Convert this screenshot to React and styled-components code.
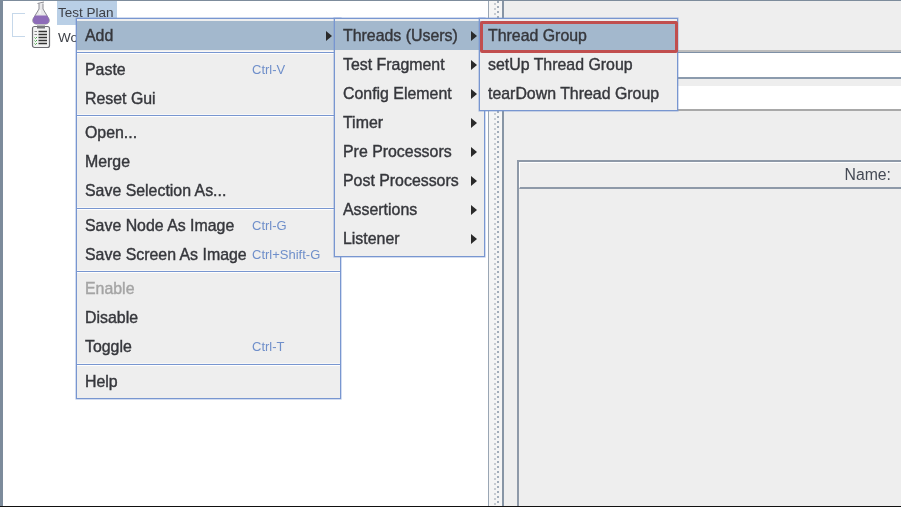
import React from 'react';
import styled, { createGlobalStyle } from 'styled-components';

const GlobalStyle = createGlobalStyle`
  html, body {
    margin: 0;
    padding: 0;
    background: #fff;
  }
`;

const Page = styled.div`
  position: relative;
  width: 901px;
  height: 507px;
  overflow: hidden;
  box-sizing: border-box;
  display: flex;
  border-top: 1px solid #7d8c9c;
  border-bottom: 1px solid #111;
  background: #eee;
  font-family: "Liberation Sans", Arial, sans-serif;
  filter: blur(0.3px);
`;

const TreePane = styled.div`
  flex: 0 0 489px;
  box-sizing: border-box;
  border-left: 3px solid #7c8b9b;
  border-right: 1px solid #9aa6b4;
  background: #fff;
  padding-left: 9px;
`;

const TreeRow = styled.div`
  display: flex;
  align-items: center;
  height: 24px;
  gap: 6px;
  padding-left: 19px;
  font-size: 13.5px;
  color: #3c3f46;
`;

const TreeLines = styled.div`
  position: absolute;
  left: 12px;
  top: 12px;
  width: 13px;
  height: 24px;
  box-sizing: border-box;
  border: 1px solid #c6d8ea;
  border-right: none;
`;

const TreeLabel = styled.span`
  padding: ${props => (props.selected ? '4px 3px 5px 1px' : '0 1px')};
  background: ${props => (props.selected ? '#b9cfe6' : 'transparent')};
`;

const Splitter = styled.div`
  flex: 0 0 15px;
  box-sizing: border-box;
  display: flex;
  justify-content: center;
  background: #f5f5f5;
  border-right: 2px solid #8795a5;
  padding-left: 1px;
`;

const Grip = styled.div`
  width: 5px;
  height: 100%;
  background-image:
    linear-gradient(to bottom, #a3adba 0 2px, transparent 2px),
    linear-gradient(to bottom, #c6cbd1 0 2px, transparent 2px);
  background-size: 2px 5px;
  background-position: 3px 0, 0 2px;
  background-repeat: repeat-y;
`;

const EditorPane = styled.div`
  flex: 1;
  display: flex;
  flex-direction: column;
  background: #eee;
`;

const TopBlank = styled.div`
  height: 49px;
  border-bottom: 2px solid #bcbcbc;
`;

const InputStrip = styled.div`
  background: #fff;
  height: ${props => props.h}px;
  border-top: ${props => (props.first ? '1px solid #7e90a6' : 'none')};
  border-bottom: 2px solid ${props => (props.first ? '#8c9bad' : '#a8a8a8')};
  margin-bottom: ${props => props.gap}px;
`;

const Panel = styled.div`
  flex: 1;
  margin: 0 0 0 13px;
  box-sizing: border-box;
  border-left: 2px solid #8e99a8;
  border-top: 2px solid #8e99a8;
`;

const PanelHeader = styled.div`
  height: 27px;
  box-sizing: border-box;
  border-left: 1px solid #fff;
  border-top: 1px solid #fff;
  border-bottom: 2px solid #8e99a8;
  display: flex;
  justify-content: flex-end;
  align-items: center;
  padding-right: 10px;
  font-size: 15.8px;
  color: #454a55;
`;

const MenuLayer = styled.div`
  position: absolute;
  left: 76px;
  top: 17px;
  display: flex;
  align-items: flex-start;
`;

const Menu = styled.div`
  position: relative;
  box-sizing: border-box;
  width: ${props => props.width}px;
  margin-left: ${props => props.overlap || 0}px;
  padding: ${props => props.pad || '2px 0'};
  background: #eee;
  border: 1px solid #7896d0;
  box-shadow: 0 0 0 0.6px rgba(120, 150, 208, 0.55);
`;

const Item = styled.div`
  display: flex;
  align-items: center;
  height: 29px;
  padding-left: 8px;
  box-sizing: border-box;
  position: relative;
  font-size: 15.9px;
  letter-spacing: 0;
  -webkit-text-stroke: 0.4px currentColor;
  color: ${props => (props.disabled ? '#a4a4a4' : '#36373c')};
  background: ${props => (props.active ? '#a3b8cd' : 'transparent')};
`;

const Shortcut = styled.span`
  position: absolute;
  left: 175px;
  font-weight: 400;
  font-size: 13px;
  -webkit-text-stroke: 0;
  color: #6f8fca;
`;

const Arrow = styled.span`
  position: absolute;
  right: ${props => props.right}px;
  width: 0;
  height: 0;
  border-top: 5px solid transparent;
  border-bottom: 5px solid transparent;
  border-left: 6px solid #2a2a2a;
`;

const Separator = styled.div`
  height: ${props => props.h}px;
  display: flex;
  flex-direction: column;
  justify-content: center;
`;

const SeparatorLine = styled.div`
  height: 1px;
  background: #7896d0;
  box-shadow: 0 1px 0 #fff, 0 -1px 0 #f8f8f8;
`;

const Highlight = styled.div`
  position: absolute;
  left: 0;
  right: -1px;
  top: 2px;
  height: 32px;
  box-sizing: border-box;
  border: 3px solid #c14e4e;
  border-radius: 2px;
`;

const FlaskIcon = () => (
  <svg width="20" height="24" viewBox="0 0 20 24">
    <path d="M6.5 2.5 L13 1 M8 2.5 V8 L2 18 Q1 22.5 5 23 H15 Q19 22.5 18 18 L12 8 V2.5" fill="#e8e8ea" stroke="#8b8b92" strokeWidth="1" />
    <path d="M4 14.5 H16 L18 18 Q18.5 22.5 15 23 H5 Q1.5 22.5 2 18 Z" fill="#8d6bb8" />
    <path d="M9 9 V13" stroke="#fff" strokeWidth="1" />
  </svg>
);

const ListIcon = () => (
  <svg width="20" height="24" viewBox="0 0 20 24">
    <rect x="1.5" y="1.5" width="17" height="21" rx="2" fill="#f3f3f3" stroke="#6d6d72" strokeWidth="1.2" />
    <rect x="6" y="0.5" width="8" height="3" fill="#77777c" />
    <path d="M7.5 6.5 H16 M7.5 9.5 H16 M7.5 12.5 H16 M7.5 15.5 H16 M7.5 18.5 H16" stroke="#333" strokeWidth="1.5" />
    <path d="M3.5 6.5 H6 M3.5 9.5 H6" stroke="#888" strokeWidth="1" />
    <path d="M3.5 12.5 L4.5 13.5 L6 12 M3.5 15.5 L4.5 16.5 L6 15 M3.5 18.5 L4.5 19.5 L6 18" stroke="#4aa84a" strokeWidth="1" fill="none" />
  </svg>
);

const mainMenu = [
  { type: 'item', label: 'Add', active: true, arrow: true },
  { type: 'sep', h: 5 },
  { type: 'item', label: 'Paste', key: 'Ctrl-V' },
  { type: 'item', label: 'Reset Gui' },
  { type: 'sep', h: 5 },
  { type: 'item', label: 'Open...' },
  { type: 'item', label: 'Merge' },
  { type: 'item', label: 'Save Selection As...' },
  { type: 'sep', h: 6 },
  { type: 'item', label: 'Save Node As Image', key: 'Ctrl-G' },
  { type: 'item', label: 'Save Screen As Image', key: 'Ctrl+Shift-G' },
  { type: 'sep', h: 5 },
  { type: 'item', label: 'Enable', disabled: true },
  { type: 'item', label: 'Disable' },
  { type: 'item', label: 'Toggle', key: 'Ctrl-T' },
  { type: 'sep', h: 6 },
  { type: 'item', label: 'Help' },
];

const addMenu = [
  'Threads (Users)',
  'Test Fragment',
  'Config Element',
  'Timer',
  'Pre Processors',
  'Post Processors',
  'Assertions',
  'Listener',
];

const threadMenu = ['Thread Group', 'setUp Thread Group', 'tearDown Thread Group'];

const App = () => (
  <Page>
    <GlobalStyle />
    <TreePane>
      <TreeLines />
      <TreeRow>
        <FlaskIcon />
        <TreeLabel selected>Test Plan</TreeLabel>
      </TreeRow>
      <TreeRow>
        <ListIcon />
        <TreeLabel>Wo</TreeLabel>
      </TreeRow>
    </TreePane>
    <Splitter>
      <Grip />
    </Splitter>
    <EditorPane>
      <TopBlank />
      <InputStrip first h={24} gap={7} />
      <InputStrip h={23} gap={49} />
      <Panel>
        <PanelHeader>Name:</PanelHeader>
      </Panel>
    </EditorPane>
    <MenuLayer>
      <Menu width={265}>
        {mainMenu.map((entry, i) => (entry.type === 'sep' ? (
          <Separator key={i} h={entry.h}><SeparatorLine /></Separator>
        ) : (
          <Item key={entry.label} active={entry.active} disabled={entry.disabled}>
            {entry.label}
            {entry.key && <Shortcut>{entry.key}</Shortcut>}
            {entry.arrow && <Arrow right={8} />}
          </Item>
        )))}
      </Menu>
      <Menu width={151} overlap={-7} pad="2px 0 3px">
        {addMenu.map((label, i) => (
          <Item key={label} active={i === 0}>
            {label}
            <Arrow right={7} />
          </Item>
        ))}
      </Menu>
      <Menu width={199} overlap={-6}>
        {threadMenu.map((label, i) => (
          <Item key={label} active={i === 0}>{label}</Item>
        ))}
        <Highlight />
      </Menu>
    </MenuLayer>
  </Page>
);

export default App;
